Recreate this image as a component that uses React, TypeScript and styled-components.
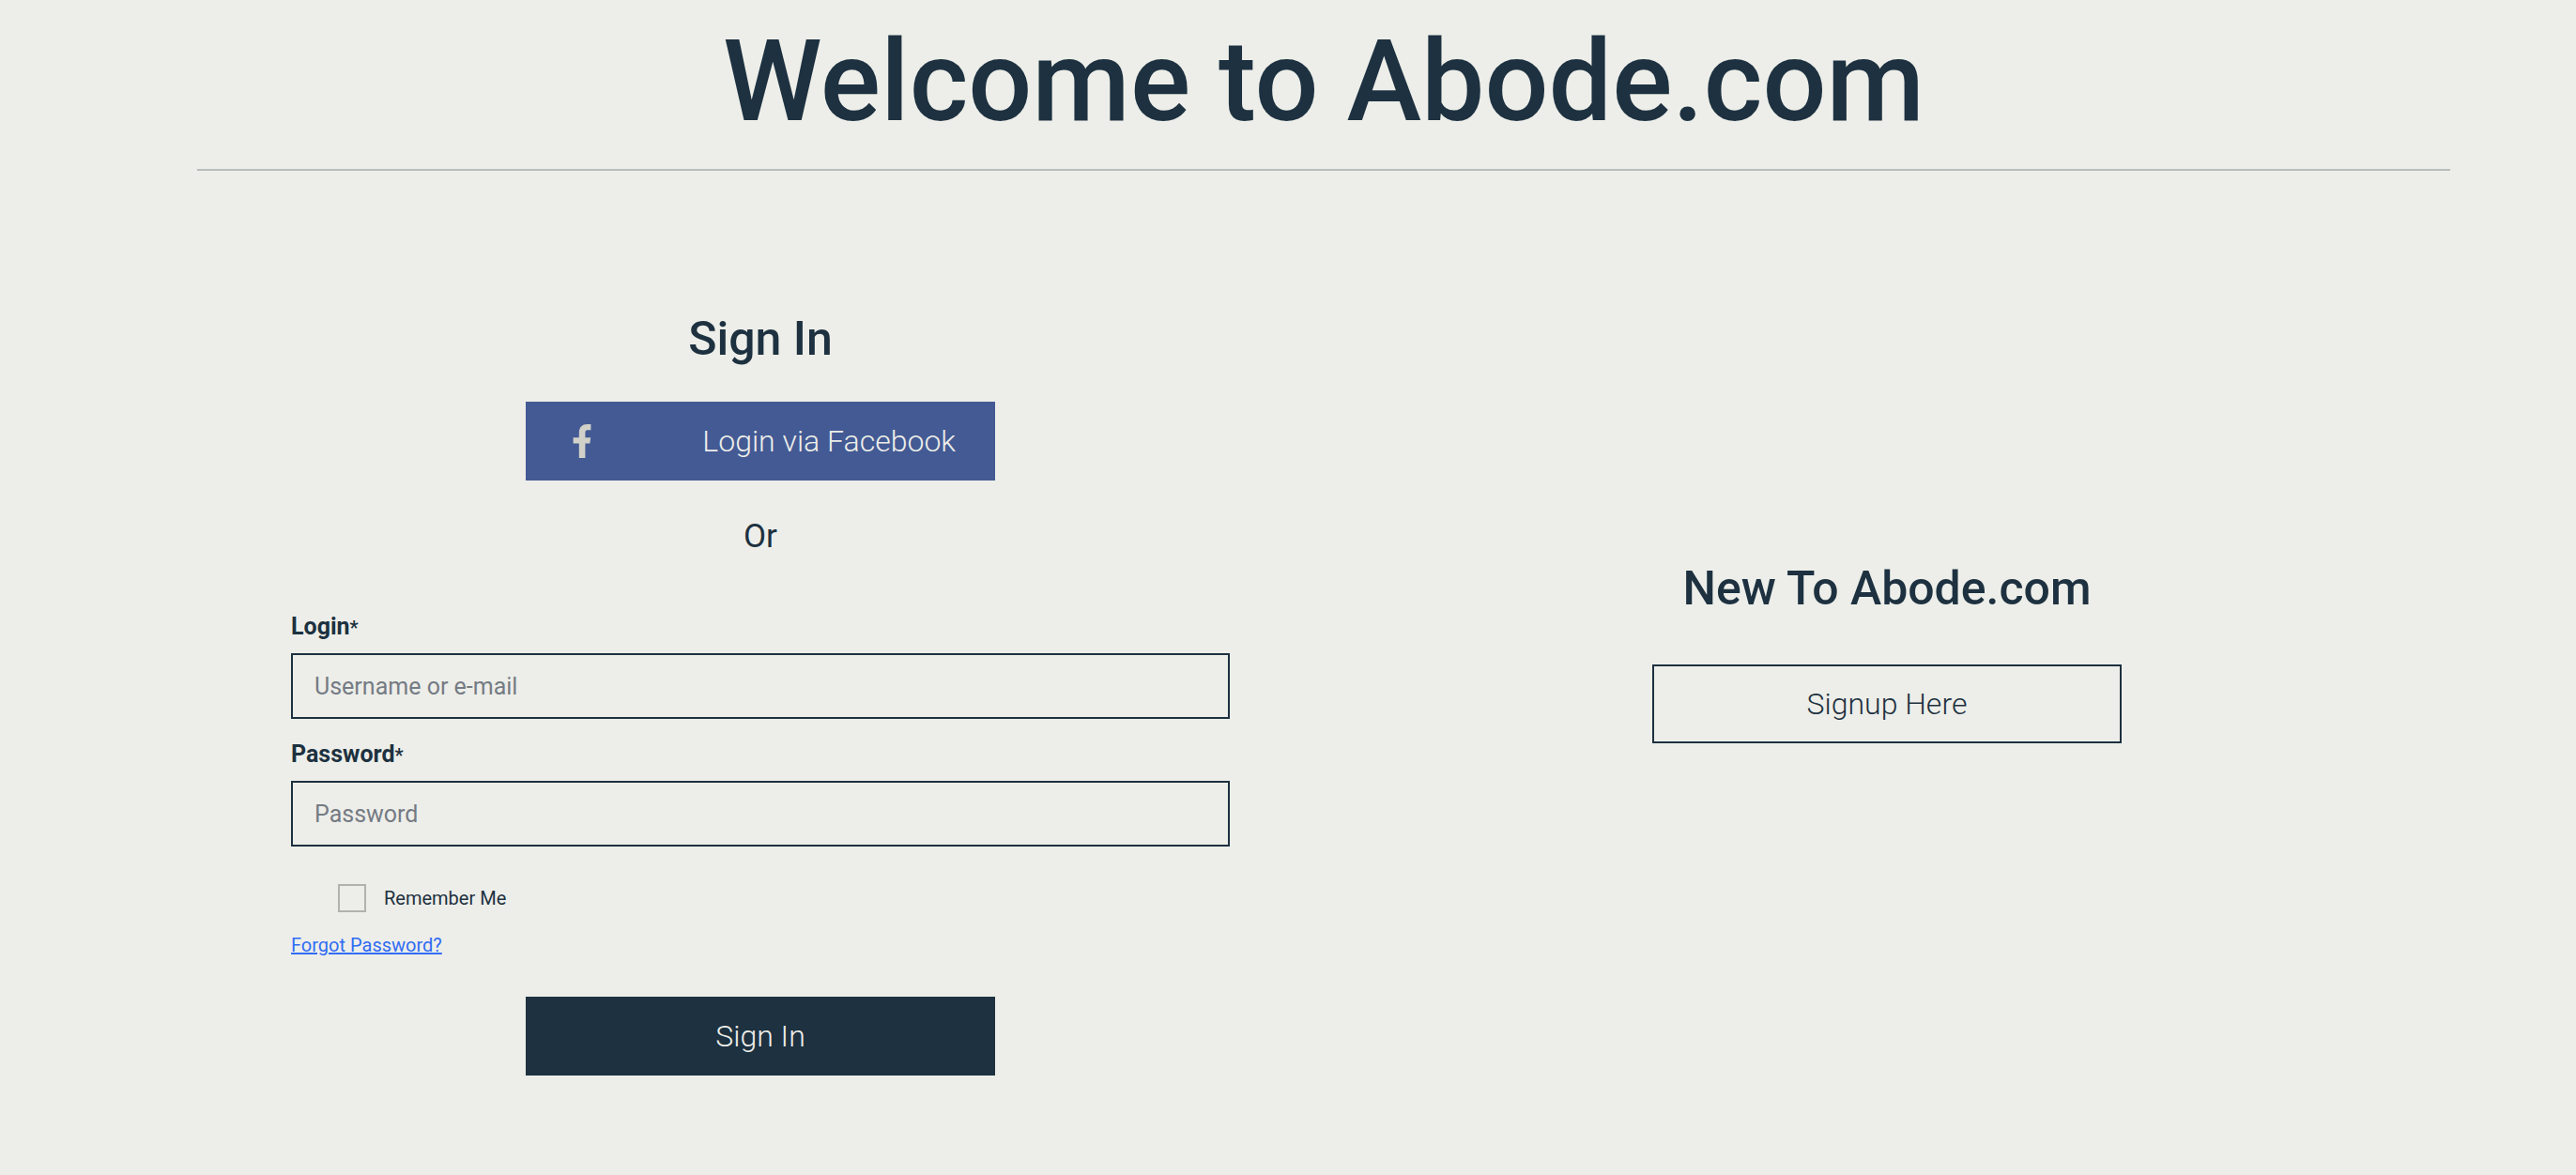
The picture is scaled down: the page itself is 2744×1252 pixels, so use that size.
import React from "react";
import styled, { createGlobalStyle, css } from "styled-components";

const navy = "#1d3140";
const paper = "#edeee9";

const GlobalStyle = createGlobalStyle`
  *, *::before, *::after { box-sizing: border-box; }
  body {
    margin: 0;
    background: ${paper};
    color: ${navy};
    font-family: Roboto, "Liberation Sans", sans-serif;
  }
`;

const Page = styled.main`
  min-height: 100vh;
  padding: 16px 0 64px 76px;
`;

const Container = styled.div`
  max-width: 2400px;
  margin: 0 auto;
`;

const Header = styled.header`
  padding-bottom: 22px;
  border-bottom: 2px solid #b7bdbc;
  text-align: center;
`;

const Title = styled.h1`
  margin: 0;
  font-size: 120px;
  font-weight: 500;
  line-height: 142px;
`;

const Columns = styled.div`
  display: grid;
  grid-template-columns: 1fr 1fr;
  align-items: center;
  padding-top: 149px;
`;

const Column = styled.section<{ $raised?: boolean }>`
  display: flex;
  flex-direction: column;
  align-items: center;
  padding: 0 100px ${(p) => (p.$raised ? "88px" : "0")};
`;

const Heading = styled.h2<{ $gap: number }>`
  margin: 0 0 ${(p) => p.$gap}px;
  font-size: 50px;
  font-weight: 500;
  line-height: 60px;
`;

const Or = styled.p`
  margin: 38px 0 60px;
  font-size: 35px;
  line-height: 44px;
`;

const Button = styled.button<{ $kind: "facebook" | "solid" | "outline" }>`
  display: flex;
  align-items: center;
  justify-content: center;
  width: 500px;
  max-width: 100%;
  height: 84px;
  padding: 0 40px;
  border: 2px solid ${navy};
  background: ${navy};
  color: ${paper};
  font: 300 32px/40px Roboto, "Liberation Sans", sans-serif;
  cursor: pointer;

  ${(p) =>
    p.$kind === "facebook" &&
    css`
      justify-content: space-between;
      background: #435a94;
      border-color: #435a94;
    `}
  ${(p) =>
    p.$kind === "outline" &&
    css`
      background: transparent;
      color: ${navy};
    `}
`;

const FacebookMark = styled.svg`
  width: 36px;
  height: 36px;
  fill: #d1d1c9;
`;

const Form = styled.form`
  display: flex;
  flex-direction: column;
  align-items: flex-start;
  width: 100%;
`;

const Field = styled.div`
  display: flex;
  flex-direction: column;
  gap: 14px;
  width: 100%;
  margin-bottom: 24px;
`;

const FieldLabel = styled.label`
  font-size: 25px;
  font-weight: 700;
  line-height: 28px;
`;

const Required = styled.span`
  font-size: 20px;
  line-height: 20px;
`;

const TextInput = styled.input`
  width: 100%;
  height: 70px;
  padding: 0 23px;
  border: 2px solid ${navy};
  border-radius: 0;
  background: transparent;
  color: ${navy};
  font: 400 25px/28px Roboto, "Liberation Sans", sans-serif;

  &::placeholder {
    color: #757b84;
    opacity: 1;
  }
`;

const Remember = styled.label`
  display: flex;
  align-items: center;
  gap: 19px;
  margin: 16px 0 23px 50px;
  font-size: 20px;
  line-height: 30px;
`;

const Checkbox = styled.input`
  appearance: none;
  width: 30px;
  height: 30px;
  margin: 0;
  border: 2px solid #b1b2ac;
  background: transparent;

  &:checked {
    background: ${navy};
  }
`;

const ForgotLink = styled.a`
  margin-bottom: 43px;
  color: #316cf4;
  font-size: 20px;
  line-height: 24px;
  text-decoration: underline 2px;
`;

const Submit = styled(Button)`
  align-self: center;
`;

type TextFieldProps = {
  id: string;
  label: string;
  type: string;
  placeholder: string;
};

function TextField({ id, label, type, placeholder }: TextFieldProps) {
  return (
    <Field>
      <FieldLabel htmlFor={id}>
        {label}
        <Required>*</Required>
      </FieldLabel>
      <TextInput id={id} name={id} type={type} placeholder={placeholder} />
    </Field>
  );
}

export default function App() {
  return (
    <>
      <GlobalStyle />
      <Page>
        <Container>
          <Header>
            <Title>Welcome to Abode.com</Title>
          </Header>
          <Columns>
            <Column>
              <Heading $gap={37}>Sign In</Heading>
              <Button type="button" $kind="facebook">
                <FacebookMark viewBox="0 0 36 36" aria-hidden="true">
                  <path d="M14.8 36V20.4H8.6V14.2h6.2V9.4C14.8 3.4 18 0 23.6 0h3.8v6.2h-3.4c-2 0-2.6 1-2.6 3v5H27.2l-.8 6.2h-5V36z" />
                </FacebookMark>
                <span>Login via Facebook</span>
              </Button>
              <Or>Or</Or>
              <Form onSubmit={(e) => e.preventDefault()}>
                <TextField id="login" label="Login" type="text" placeholder="Username or e-mail" />
                <TextField id="password" label="Password" type="password" placeholder="Password" />
                <Remember>
                  <Checkbox type="checkbox" name="remember" />
                  Remember Me
                </Remember>
                <ForgotLink href="#forgot">Forgot Password?</ForgotLink>
                <Submit type="submit" $kind="solid">
                  Sign In
                </Submit>
              </Form>
            </Column>
            <Column $raised>
              <Heading $gap={51}>New To Abode.com</Heading>
              <Button type="button" $kind="outline">
                Signup Here
              </Button>
            </Column>
          </Columns>
        </Container>
      </Page>
    </>
  );
}
